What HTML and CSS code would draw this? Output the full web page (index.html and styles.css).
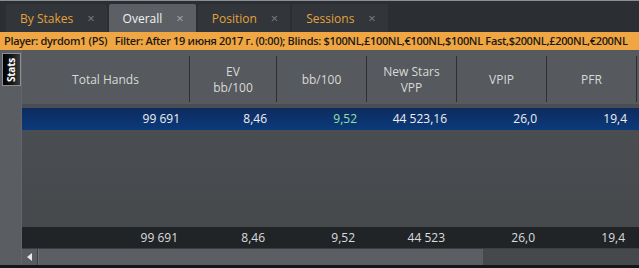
FILE: index.html
```html
<!DOCTYPE html>
<html lang="ru">
<head>
    <meta charset="UTF-8">
    <title>Overall</title>
    <link rel="stylesheet" href="styles.css">
</head>
<body>
    <div class="window">
        <!-- вкладки -->
        <div class="tabbar">
            <div class="tab">By Stakes<span class="close">×</span></div>
            <div class="tab active">Overall<span class="close">×</span></div>
            <div class="tab">Position<span class="close">×</span></div>
            <div class="tab">Sessions<span class="close">×</span></div>
        </div>

        <div class="filter">Player: dyrdom1 (PS)&nbsp;&nbsp; Filter: After 19 июня 2017 г. (0:00); Blinds: $100NL,£100NL,€100NL,$100NL Fast,$200NL,£200NL,€200NL</div>

        <div class="main">
            <div class="side">
                <div class="side-tab"><span>Stats</span></div>
            </div>

            <div class="grid">
                <div class="row head">
                    <div class="cell">Total Hands</div>
                    <div class="cell">EV<br>bb/100</div>
                    <div class="cell">bb/100</div>
                    <div class="cell">New Stars<br>VPP</div>
                    <div class="cell">VPIP</div>
                    <div class="cell">PFR</div>
                </div>

                <div class="row data selected">
                    <div class="cell">99 691</div>
                    <div class="cell">8,46</div>
                    <div class="cell positive">9,52</div>
                    <div class="cell">44 523,16</div>
                    <div class="cell">26,0</div>
                    <div class="cell">19,4</div>
                </div>

                <div class="empty"></div>

                <div class="row data total">
                    <div class="cell">99 691</div>
                    <div class="cell">8,46</div>
                    <div class="cell">9,52</div>
                    <div class="cell">44 523</div>
                    <div class="cell">26,0</div>
                    <div class="cell">19,4</div>
                </div>

                <div class="hscroll">
                    <div class="arrow"></div>
                    <div class="thumb"></div>
                </div>
            </div>
        </div>
    </div>
</body>
</html>
```

FILE: styles.css
```css
* {
    box-sizing: border-box;
}

body {
    margin: 0;
    background: #1c1e21;
    font-family: "Open Sans", "Noto Sans", sans-serif;
    font-size: 12px;
    color: #e4e4e4;
    overflow: hidden;
}

.window {
    width: 639px;
    height: 268px;
    display: flex;
    flex-direction: column;
    border-bottom: 3px solid #151618;
}

/* вкладки */
.tabbar {
    height: 32px;
    background: #2b2e32;
    border-top: 1px solid #8b8f93;
    display: flex;
    align-items: flex-end;
    gap: 2px;
    padding-left: 6px;
}

.tab {
    height: 28px;
    background: #323539;
    color: #e3a23d;
    display: flex;
    align-items: center;
    padding: 0 12px 0 14px;
    border-radius: 2px 2px 0 0;
    font-size: 12px;
}

.tab.active {
    background: #5c6064;
    color: #f2f2f2;
}

.close {
    color: #7b7e82;
    margin-left: 14px;
    font-size: 13px;
}

.tab.active .close {
    color: #a3a6a9;
}

.filter {
    height: 18px;
    line-height: 18px;
    background: #efa643;
    color: #1d1a14;
    font-size: 11px;
    font-weight: 600;
    padding-left: 4px;
    white-space: nowrap;
    overflow: hidden;
    letter-spacing: -0.32px;
}

.main {
    flex: 1;
    display: flex;
    min-height: 0;
}

.side {
    width: 22px;
    background: #5a5d61;
    border-right: 1px solid #62656a;
    padding: 3px 0 0 2px;
}

.side-tab {
    width: 19px;
    height: 33px;
    background: linear-gradient(90deg, #000 0%, #1a1b1d 60%, #3a3c3f 100%);
    border: 1px solid #8c8f93;
    display: flex;
    align-items: center;
    justify-content: center;
}

.side-tab span {
    transform: rotate(-90deg);
    color: #fff;
    font-size: 10px;
    font-weight: 700;
    letter-spacing: -0.2px;
}

.grid {
    flex: 1;
    display: flex;
    flex-direction: column;
    background: linear-gradient(180deg, #4d5054 0%, #45484b 100%);
    min-width: 0;
}

.row {
    display: grid;
    grid-template-columns: 168px 87px 90px 90px 90px 90px;
}

.head {
    height: 56px;
    background: #56595d;
    color: #d9d9d9;
    border-bottom: 2px solid #4a4d51;
}

.head .cell {
    display: flex;
    align-items: center;
    justify-content: center;
    text-align: center;
    line-height: 16px;
    margin: 6px 0 2px;
    padding-top: 2px;
    border-right: 1px solid #2c2e31;
}

.data {
    height: 22px;
    line-height: 22px;
}

.data .cell {
    text-align: right;
    padding-right: 10px;
}

.selected {
    margin-top: 2px;
    background: linear-gradient(180deg, #0d2b5e 0%, #0c3470 60%, #0b3a7a 100%);
    color: #f0f0f0;
}

.positive {
    color: #8fe3a6;
}

.empty {
    flex: 1;
}

.total {
    height: 21px;
    line-height: 21px;
    background: #212427;
    color: #dcdcdc;
}

.total .cell {
    padding-right: 12px;
}

.hscroll {
    height: 17px;
    display: flex;
    background: #46494c;
    border-top: 1px solid #3c3f42;
}

.arrow {
    width: 16px;
    background: #595c60;
    border-right: 1px solid #3e4144;
    position: relative;
}

.arrow::after {
    content: "";
    position: absolute;
    left: 5px;
    top: 4px;
    border-top: 4px solid transparent;
    border-bottom: 4px solid transparent;
    border-right: 5px solid #e8e8e8;
}

.thumb {
    width: 445px;
    background: #5b5e62;
    border-left: 1px solid #6a6d71;
}
```
